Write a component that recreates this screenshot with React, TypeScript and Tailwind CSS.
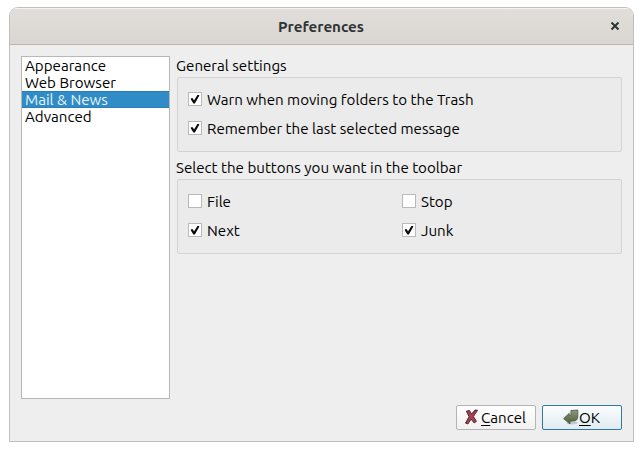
import React from "react";

const categories = [
  { label: "Appearance" },
  { label: "Web Browser" },
  { label: "Mail & News", selected: true },
  { label: "Advanced" },
];

function CheckOption({ label, checked }: { label: string; checked?: boolean }) {
  return (
    <label className="flex h-[14px] items-center gap-[5px]">
      <span className="size-[14px] shrink-0 border border-[#b9b9b9] bg-white">
        {checked && (
          <svg viewBox="0 0 12 12" className="block size-3">
            <path d="M1.9 5.2 3.8 5.2 5 7.6 8.4 1.9 10.2 1.9 10.2 2.8 5.9 10.4 4.4 10.4 1.9 6.5Z" fill="#0a0a0a" />
          </svg>
        )}
      </span>
      <span className="whitespace-nowrap pt-px leading-[17px]">{label}</span>
    </label>
  );
}

function CancelIcon() {
  return (
    <svg viewBox="0 0 16 16" className="mb-px size-4 shrink-0">
      <path d="M2.4 2.2 5.4 1.4 7.5 5.1 11 1 13.6 1.3 9.4 7.4 12.4 12.4 10.2 13.9 7 10.2 3.9 14.9 1.5 14.1 5.1 7.7Z" fill="#a5434e" stroke="#4e272d" strokeWidth="1" strokeLinejoin="round" />
    </svg>
  );
}

function OkIcon() {
  return (
    <svg viewBox="0 0 16 16" className="mb-px size-4 shrink-0">
      <defs>
        <linearGradient id="arrow" x1="0" y1="0" x2="0" y2="1">
          <stop offset="0" stopColor="#8d9a80" />
          <stop offset="1" stopColor="#4b5f39" />
        </linearGradient>
      </defs>
      <ellipse cx="9" cy="14" rx="5.5" ry="1.4" fill="#000" opacity=".15" />
      <path d="M7.9 1.5 14.8 1V7.8Q14.4 12 10.5 12.1L7 12.2V15L.6 9.6 6.2 4.3V6.5L7.9 6.3Z" fill="url(#arrow)" stroke="#4c5740" strokeWidth=".8" strokeLinejoin="round" />
    </svg>
  );
}

export default function App() {
  return (
    <div className="h-[451px] w-[643px] bg-white pl-[9px] pt-[7px] font-['Ubuntu','Noto_Sans',sans-serif] text-[15.13px] text-black">
      <main className="flex h-[435px] w-[625px] flex-col overflow-hidden rounded-t-[9px] border border-[#bfbfbf] bg-[#eeeeee]">
        <header className="relative flex h-[37px] shrink-0 items-center justify-center border-b border-[#bbb5ab] bg-linear-to-b from-[#e1dedb] to-[#dad6d1] pr-px shadow-[inset_0_1px_0_#f5f4f2]">
          <h1 className="pt-px text-[15.15px] font-bold leading-5 text-[#2e3436]">Preferences</h1>
          <button aria-label="Close" className="absolute right-[13px] top-[13px] size-[10px]">
            <svg viewBox="0 0 10 10" className="size-full">
              <path d="m1.5 1.5 7 7m0-7-7 7" stroke="#2e3436" strokeWidth="2" />
            </svg>
          </button>
        </header>
        <div className="flex gap-[7px] px-[11px] pt-[11px]">
          <nav className="h-[343px] w-[149px] shrink-0 border border-[#b7b7b7] bg-white">
            {categories.map((item) => (
              <div
                key={item.label}
                className={`h-[17px] whitespace-nowrap pl-[3px] ${item.selected ? "border-y border-[#2980b9] bg-[#308cc6] leading-[15px] text-[#e8f2f9]" : "leading-[17px]"}`}
              >
                {item.label}
              </div>
            ))}
          </nav>
          <div className="min-w-0 flex-1">
            <section>
              <h2 className="-ml-px h-[21px] whitespace-nowrap leading-[19px]">General settings</h2>
              <div className="flex h-[75px] flex-col gap-[15px] rounded-[2px] border border-[#d3d3d3] bg-[#ebebeb] pl-[10px] pt-[14px]">
                <CheckOption label="Warn when moving folders to the Trash" checked />
                <CheckOption label="Remember the last selected message" checked />
              </div>
            </section>
            <section className="mt-[6px]">
              <h2 className="-ml-px h-[21px] whitespace-nowrap leading-[19px]">Select the buttons you want in the toolbar</h2>
              <div className="grid h-[75px] grid-cols-[214px_1fr] content-start gap-y-[15px] rounded-[2px] border border-[#d3d3d3] bg-[#ebebeb] pl-[10px] pt-[14px]">
                <CheckOption label="File" />
                <CheckOption label="Stop" />
                <CheckOption label="Next" checked />
                <CheckOption label="Junk" checked />
              </div>
            </section>
          </div>
        </div>
        <footer className="mt-[6px] flex justify-end gap-[6px] pr-[11px]">
          <button className="flex h-[25px] w-20 items-center rounded-[2px] border border-[#b4b4b4] bg-linear-to-b from-white to-[#f1f1f1] pl-[7px]">
            <CancelIcon />
            <span className="ml-px whitespace-nowrap leading-[17px]"><u className="underline-offset-2">C</u>ancel</span>
          </button>
          <button className="flex h-[25px] w-20 items-center rounded-[2px] border border-[#3079a3] bg-linear-to-b from-[#fbfdfe] to-[#e0ebf1] pl-[20px]">
            <OkIcon />
            <span className="whitespace-nowrap leading-[17px]"><u className="underline-offset-2">O</u>K</span>
          </button>
        </footer>
      </main>
    </div>
  );
}
